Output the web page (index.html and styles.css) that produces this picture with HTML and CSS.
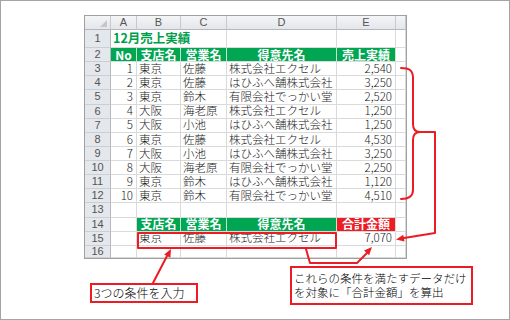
FILE: index.html
```html
<!DOCTYPE html>
<html lang="ja">
<head>
<meta charset="utf-8">
<link rel="stylesheet" href="styles.css">
</head>
<body>
<div class="frame">
  <div class="sheet">
    <div class="ch corner"><span class="tri"></span></div><div class="ch">A</div><div class="ch">B</div><div class="ch">C</div><div class="ch">D</div><div class="ch">E</div><div class="ch"></div>

    <div class="rh">1</div><div class="c title">12月売上実績</div><div class="c"></div><div class="c"></div><div class="c"></div>

    <div class="rh">2</div><div class="c g">No</div><div class="c g">支店名</div><div class="c g">営業名</div><div class="c g">得意先名</div><div class="c g">売上実績</div><div class="c"></div>

    <div class="rh">3</div><div class="c num">1</div><div class="c">東京</div><div class="c">佐藤</div><div class="c">株式会社エクセル</div><div class="c num">2,540</div><div class="c"></div>
    <div class="rh">4</div><div class="c num">2</div><div class="c">東京</div><div class="c">佐藤</div><div class="c">はひふへ舗株式会社</div><div class="c num">3,250</div><div class="c"></div>
    <div class="rh">5</div><div class="c num">3</div><div class="c">東京</div><div class="c">鈴木</div><div class="c">有限会社でっかい堂</div><div class="c num">2,520</div><div class="c"></div>
    <div class="rh">6</div><div class="c num">4</div><div class="c">大阪</div><div class="c">海老原</div><div class="c">株式会社エクセル</div><div class="c num">1,250</div><div class="c"></div>
    <div class="rh">7</div><div class="c num">5</div><div class="c">大阪</div><div class="c">小池</div><div class="c">はひふへ舗株式会社</div><div class="c num">1,250</div><div class="c"></div>
    <div class="rh">8</div><div class="c num">6</div><div class="c">東京</div><div class="c">佐藤</div><div class="c">株式会社エクセル</div><div class="c num">4,530</div><div class="c"></div>
    <div class="rh">9</div><div class="c num">7</div><div class="c">大阪</div><div class="c">小池</div><div class="c">はひふへ舗株式会社</div><div class="c num">3,250</div><div class="c"></div>
    <div class="rh">10</div><div class="c num">8</div><div class="c">大阪</div><div class="c">海老原</div><div class="c">有限会社でっかい堂</div><div class="c num">2,250</div><div class="c"></div>
    <div class="rh">11</div><div class="c num">9</div><div class="c">東京</div><div class="c">鈴木</div><div class="c">はひふへ舗株式会社</div><div class="c num">1,120</div><div class="c"></div>
    <div class="rh">12</div><div class="c num">10</div><div class="c">東京</div><div class="c">鈴木</div><div class="c">有限会社でっかい堂</div><div class="c num">4,510</div><div class="c"></div>

    <div class="rh">13</div><div class="c"></div><div class="c"></div><div class="c"></div><div class="c"></div><div class="c"></div><div class="c"></div>

    <div class="rh">14</div><div class="c"></div><div class="c g">支店名</div><div class="c g">営業名</div><div class="c g">得意先名</div><div class="c r">合計金額</div><div class="c"></div>

    <div class="rh">15</div><div class="c"></div><div class="c">東京</div><div class="c">佐藤</div><div class="c">株式会社エクセル</div><div class="c num">7,070</div><div class="c"></div>

    <div class="rh">16</div><div class="c"></div><div class="c"></div><div class="c"></div><div class="c"></div><div class="c"></div><div class="c"></div>
  </div>

  <svg class="overlay" width="510" height="320" viewBox="0 0 510 320">
    <g fill="none" stroke="#ec1c24" stroke-width="2" stroke-linejoin="round" stroke-linecap="round">
      <path d="M401,68 C409,68 413,70 413,78 L413,124 C413,130 416,132 420,132 C416,132 413,134 413,140 L413,190 C413,196 409,199 401,199"/>
      <polyline points="420,132 435,132 435,233 404,238"/>
      <rect x="138" y="233" width="198" height="15"/>
      <line x1="153" y1="283" x2="167" y2="256"/>
      <polyline points="306,249 310,263 357,263 367,253"/>
    </g>
    <g fill="#ec1c24">
      <polygon points="171,249 170.4,257.7 164.2,254.5"/>
      <polygon points="396,239.5 404.5,241.6 403.3,234.7"/>
      <polygon points="372,247 369.1,255.3 364,250.5"/>
    </g>
  </svg>

  <div class="note note1">3つの条件を入力</div>
  <div class="note note2">これらの条件を満たすデータだけ<br>を対象に「合計金額」を算出</div>
</div>
</body>
</html>
```

FILE: styles.css
```css
html, body {
  margin: 0;
  padding: 0;
  background: #ffffff;
}

.frame {
  position: relative;
  width: 510px;
  height: 320px;
  box-sizing: border-box;
  padding: 15px 0 0 84px;
  background: #ffffff;
  box-shadow: inset 0 0 0 1px #a4a4a4;
  overflow: hidden;
  font-family: "Noto Sans CJK JP", "Noto Sans", sans-serif;
}

.sheet {
  display: grid;
  grid-template-columns: 26px 26px 44px 46px 110px 59px 10px;
  grid-template-rows: 14px 18px repeat(14, 14.13px) 12px;
  width: max-content;
  border: 1px solid #a0a0a0;
  background: #ffffff;
  font-size: 11.5px;
  font-weight: 300;
  color: #1a1a1a;
}

.sheet > div {
  box-sizing: border-box;
  display: flex;
  align-items: center;
  white-space: nowrap;
  overflow: visible;
  line-height: 1;
}

.ch {
  justify-content: center;
  background: linear-gradient(#f4f5f7, #e3e6ea);
  border-right: 1px solid #c6cad0;
  border-bottom: 1px solid #b4b8be;
  font-family: "Liberation Sans", Arial, sans-serif;
  font-size: 11px;
  font-weight: 400;
  color: #555;
}

.corner {
  position: relative;
}

.tri {
  position: absolute;
  right: 3px;
  bottom: 2px;
  width: 0;
  height: 0;
  border-left: 7px solid transparent;
  border-bottom: 7px solid #c3c6cb;
}

.rh {
  justify-content: center;
  background: #e4e7eb;
  border-right: 1px solid #b4b8be;
  border-bottom: 1px solid #cbcfd4;
  font-family: "Liberation Sans", Arial, sans-serif;
  font-size: 11px;
  font-weight: 400;
  color: #555;
}

.c {
  background: #ffffff;
  border-right: 1px solid #dadada;
  border-bottom: 1px solid #dadada;
  padding: 0 2px;
}

.title {
  grid-column: span 3;
  color: #00a04a;
  font-weight: bold;
  font-size: 12.5px;
  padding-left: 2px;
}

.num {
  justify-content: flex-end;
  padding-right: 3px;
}

.g {
  justify-content: center;
  background: #00a651;
  color: #ffffff;
  font-weight: bold;
  border-right-color: #c4e8d0;
  font-size: 12px;
}

.r {
  justify-content: center;
  background: #ee1c25;
  color: #ffffff;
  font-weight: bold;
  font-size: 12px;
}

.overlay {
  position: absolute;
  top: 0;
  left: 0;
  pointer-events: none;
}

.note {
  position: absolute;
  box-sizing: border-box;
  background: #ffffff;
  border: 2px solid #ec1c24;
  color: #000;
  font-size: 12px;
  font-weight: 300;
  white-space: nowrap;
}

.note1 {
  left: 90px;
  top: 283px;
  width: 108px;
  height: 20px;
  line-height: 16px;
  padding-left: 2px;
}

.note2 {
  left: 290px;
  top: 266px;
  width: 183px;
  height: 39px;
  line-height: 14px;
  padding: 3px 0 0 2px;
  font-size: 11.5px;
}
```
